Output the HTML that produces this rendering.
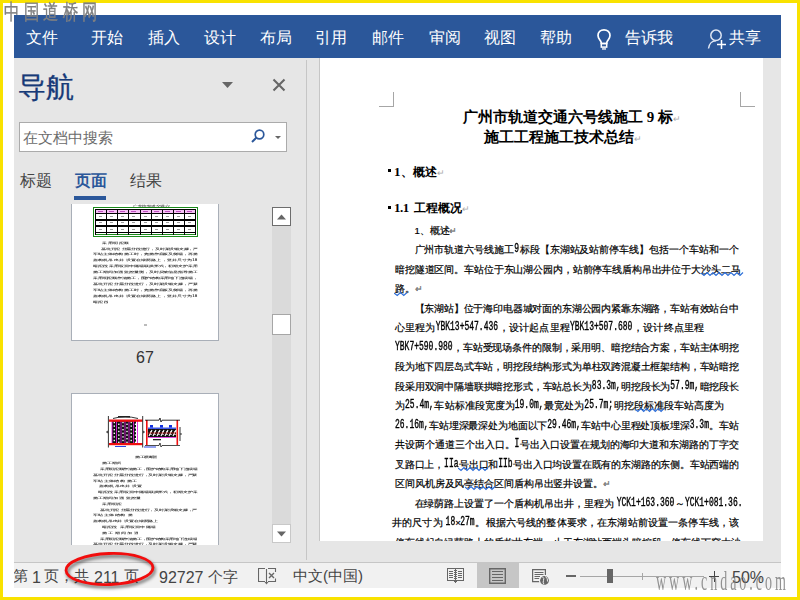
<!DOCTYPE html>
<html><head><meta charset="utf-8">
<style>
*{margin:0;padding:0;box-sizing:border-box}
html,body{width:800px;height:600px;overflow:hidden;background:#fff;font-family:"Liberation Sans",sans-serif}
.abs{position:absolute}
#ybT{left:0;top:0;width:800px;height:3px;background:#f9e200}
#ybB{left:0;top:597px;width:800px;height:3px;background:#f9e200}
#ybL{left:0;top:0;width:3px;height:600px;background:#f9e200}
#ybR{left:797px;top:0;width:3px;height:600px;background:#f9e200}
#ribbon{left:14px;top:15px;width:767px;height:43px;background:#2b579a}
.tab{position:absolute;top:14px;color:#fff;font-size:15.5px;line-height:17px;white-space:nowrap}
#nav{left:14px;top:58px;width:292px;height:504px;background:#e6e6e6}
#sep1{left:306px;top:60px;width:1px;height:500px;background:#c6c6c6}
#gap{left:307px;top:58px;width:12px;height:504px;background:#e6e6e6}
#docbg{left:306px;top:58px;width:475px;height:504px;background:#e6e6e6}
#page{left:320px;top:58px;width:443px;height:483px;background:#fff;overflow:hidden}
#pageline{left:319px;top:58px;width:1px;height:483px;background:#c6c6c6}
#status{left:14px;top:562px;width:767px;height:26px;background:#f1f1f1;border-top:1px solid #c6c6c6}
.tl{position:absolute;height:12px;font-size:9.2px;line-height:12px;font-weight:bold;color:#3a3a3a;white-space:nowrap;overflow:hidden;text-align:justify;text-align-last:justify;transform:scale(.5,.3);transform-origin:0 50%}
.ttl{font-size:15px;line-height:20px;font-weight:bold;color:#000;white-space:nowrap;font-family:"Liberation Serif",serif}
.hd{font-size:12px;line-height:17px;font-weight:bold;color:#000;white-space:nowrap;font-family:"Liberation Serif",serif}
.sf{font-family:"Liberation Serif",serif}
.pm{font-size:9px;color:#aaa;font-weight:normal;font-family:"Liberation Sans",sans-serif}
.bl{font-size:9.6px;line-height:14px;color:#000;white-space:nowrap;letter-spacing:-0.6px;-webkit-text-stroke:.2px #000}
.j{text-align:justify;text-align-last:justify}
.nj{letter-spacing:-0.1px}
.m{display:inline-block;font-family:"Liberation Mono",monospace;font-size:8px;letter-spacing:0;-webkit-text-stroke:.25px #000;transform:scaleY(1.5);transform-origin:50% 72%}
.st{position:absolute;top:4px;font-size:15px;line-height:17px;color:#444;white-space:nowrap}
</style></head><body>
<div class="abs" id="ribbon">
  <div class="tab" style="left:12px">文件</div>
  <div class="tab" style="left:77px">开始</div>
  <div class="tab" style="left:134px">插入</div>
  <div class="tab" style="left:190px">设计</div>
  <div class="tab" style="left:246px">布局</div>
  <div class="tab" style="left:301px">引用</div>
  <div class="tab" style="left:358px">邮件</div>
  <div class="tab" style="left:415px">审阅</div>
  <div class="tab" style="left:470px">视图</div>
  <div class="tab" style="left:526px">帮助</div>
  <div class="tab" style="left:611px">告诉我</div>
  <svg class="abs" style="left:580px;top:13px" width="20" height="24"><path d="M8.5 27.5" /><path d="M10 1.8C6.5 1.8 4 4.3 4 7.5C4 10 5.5 11.5 6.7 13.3C7.3 14.2 7.3 15 7.3 15.5H12.7C12.7 15 12.7 14.2 13.3 13.3C14.5 11.5 16 10 16 7.5C16 4.3 13.5 1.8 10 1.8Z" fill="none" stroke="#fff" stroke-width="1.7"/><rect x="7.3" y="15.5" width="5.4" height="3.6" fill="none" stroke="#fff" stroke-width="1.5"/><rect x="8" y="20.3" width="4" height="1.3" fill="#fff"/></svg>
  <svg class="abs" style="left:692px;top:12px" width="22" height="24"><circle cx="10" cy="8.3" r="5.2" fill="none" stroke="#dfe6f3" stroke-width="1.5"/><path d="M2.5 21.5C3 17 6 13.8 10 13.8" fill="none" stroke="#dfe6f3" stroke-width="1.5"/><path d="M11 17.5H20M15.5 13V22" stroke="#fff" stroke-width="1.5"/></svg>

  <div class="tab" style="left:715px">共享</div>
</div>
<div class="abs" id="nav">
  <div class="abs" style="left:4px;top:14px;font-size:28px;line-height:32px;color:#173a78;white-space:nowrap;-webkit-text-stroke:.3px #173a78">导航</div>
  <svg class="abs" style="left:208px;top:24px" width="12" height="7"><path d="M0 0H11L5.5 6Z" fill="#666"/></svg>
  <svg class="abs" style="left:258px;top:20px" width="14" height="14"><path d="M1.5 1.5L12.5 12.5M12.5 1.5L1.5 12.5" stroke="#666" stroke-width="2.1"/></svg>
  <div class="abs" style="left:5px;top:64px;width:268px;height:30px;background:#fff;border:1px solid #ababab"></div>
  <div class="abs" style="left:9px;top:71px;font-size:15px;line-height:17px;color:#6b6b6b;white-space:nowrap">在文档中搜索</div>
  <svg class="abs" style="left:236px;top:70px" width="16" height="16"><circle cx="9.5" cy="6.5" r="4.3" fill="none" stroke="#2b579a" stroke-width="1.7"/><path d="M6.5 9.5L2 14" stroke="#2b579a" stroke-width="2"/></svg>
  <svg class="abs" style="left:261px;top:78px" width="7" height="4"><path d="M0 0H6L3 3Z" fill="#666"/></svg>
  <div class="abs" style="left:6px;top:114px;font-size:15.5px;line-height:17px;color:#444;white-space:nowrap">标题</div>
  <div class="abs" style="left:61px;top:114px;font-size:15.5px;line-height:17px;color:#2b579a;font-weight:bold;white-space:nowrap">页面</div>
  <div class="abs" style="left:116px;top:114px;font-size:15.5px;line-height:17px;color:#444;white-space:nowrap">结果</div>
  <div class="abs" style="left:60px;top:138px;width:32px;height:4px;background:#2b579a"></div>
</div>
<div class="abs" id="docbg"></div>
<div class="abs" id="thumbs" style="left:14px;top:204px;width:292px;height:341px;overflow:hidden">
<div style="position:absolute;left:-14px;top:-204px;width:320px;height:560px">
<div class="abs" style="left:71px;top:150px;width:148px;height:191px;background:#fff;border:1px solid #a9afb8"></div>
<div class="tl" style="left:133px;top:200.0px;width:74.0px;opacity:.8">广州市轨道交通六号线施工</div>
<div class="abs" style="left:93px;top:207px;width:105px;height:30px;border:1px solid #1a8a1a;"></div>
<div class="abs" style="left:94px;top:208px;width:103px;height:28px;border:1px solid #fff;"></div><div class="abs" style="left:95px;top:209px;width:101px;height:26px;border:1px solid #1a8a1a;"></div>
<svg class="abs" style="left:95px;top:209px" width="101" height="26" shape-rendering="crispEdges">
<rect x="0" y="1" width="101" height="3" fill="#f6c0f6"/>
<rect x="0" y="0" width="1" height="26" fill="#000"/>
<rect x="11" y="0" width="1" height="26" fill="#000"/>
<rect x="22" y="0" width="1" height="26" fill="#000"/>
<rect x="33" y="0" width="1" height="26" fill="#000"/>
<rect x="45" y="0" width="1" height="26" fill="#000"/>
<rect x="56" y="0" width="1" height="26" fill="#000"/>
<rect x="67" y="0" width="1" height="26" fill="#000"/>
<rect x="78" y="0" width="1" height="26" fill="#000"/>
<rect x="89" y="0" width="1" height="26" fill="#000"/>
<rect x="100" y="0" width="1" height="26" fill="#000"/>
<rect x="3" y="2" width="5" height="1" fill="#c050c0"/>
<rect x="14" y="2" width="5" height="1" fill="#c050c0"/>
<rect x="25" y="2" width="5" height="1" fill="#c050c0"/>
<rect x="36" y="2" width="5" height="1" fill="#c050c0"/>
<rect x="48" y="2" width="5" height="1" fill="#c050c0"/>
<rect x="59" y="2" width="5" height="1" fill="#c050c0"/>
<rect x="70" y="2" width="5" height="1" fill="#c050c0"/>
<rect x="81" y="2" width="5" height="1" fill="#c050c0"/>
<rect x="92" y="2" width="5" height="1" fill="#c050c0"/>
<rect x="0" y="0" width="101" height="1" fill="#000"/>
<rect x="0" y="4" width="101" height="1" fill="#000"/>
<rect x="0" y="10" width="101" height="1.5" fill="#000"/>
<rect x="0" y="16" width="101" height="1.5" fill="#000"/>
<rect x="0" y="23" width="101" height="1" fill="#000"/>
<rect x="4" y="7" width="3" height="1" fill="#999"/>
<rect x="15" y="7" width="3" height="1" fill="#999"/>
<rect x="26" y="7" width="3" height="1" fill="#999"/>
<rect x="37" y="7" width="3" height="1" fill="#999"/>
<rect x="49" y="7" width="3" height="1" fill="#999"/>
<rect x="60" y="7" width="3" height="1" fill="#999"/>
<rect x="71" y="7" width="3" height="1" fill="#999"/>
<rect x="82" y="7" width="3" height="1" fill="#999"/>
<rect x="93" y="7" width="3" height="1" fill="#999"/>
<rect x="4" y="13" width="3" height="1" fill="#999"/>
<rect x="15" y="13" width="3" height="1" fill="#999"/>
<rect x="26" y="13" width="3" height="1" fill="#999"/>
<rect x="37" y="13" width="3" height="1" fill="#999"/>
<rect x="49" y="13" width="3" height="1" fill="#999"/>
<rect x="60" y="13" width="3" height="1" fill="#999"/>
<rect x="71" y="13" width="3" height="1" fill="#999"/>
<rect x="82" y="13" width="3" height="1" fill="#999"/>
<rect x="93" y="13" width="3" height="1" fill="#999"/>
<rect x="4" y="20" width="3" height="1" fill="#999"/>
<rect x="15" y="20" width="3" height="1" fill="#999"/>
<rect x="26" y="20" width="3" height="1" fill="#999"/>
<rect x="37" y="20" width="3" height="1" fill="#999"/>
<rect x="49" y="20" width="3" height="1" fill="#999"/>
<rect x="60" y="20" width="3" height="1" fill="#999"/>
<rect x="71" y="20" width="3" height="1" fill="#999"/>
<rect x="82" y="20" width="3" height="1" fill="#999"/>
<rect x="93" y="20" width="3" height="1" fill="#999"/>
</svg>
<div class="tl" style="left:102px;top:237.2px;width:53.0px">采用明挖顺</div>
<div class="tl" style="left:100.7px;top:242.8px;width:193.4px">基坑开挖 分层分段进行，及时架设钢支撑，严</div>
<div class="tl" style="left:93px;top:248.4px;width:208.8px">车站主体结构 施工时，先施作底板及侧墙，再施</div>
<div class="tl" style="left:93px;top:254.2px;width:208.8px">盾构机吊出井 设置在绿荫路上，竖井尺寸为18</div>
<div class="tl" style="left:93px;top:260.0px;width:208.8px">暗挖段 采用双洞中隔墙联拱形式，初期支护采用</div>
<div class="tl" style="left:93px;top:265.8px;width:208.8px">施工期间加强 监控量测，及时反馈信息指导施工</div>
<div class="tl" style="left:93px;top:271.7px;width:208.8px">采用明挖顺作法施工，围护结构采用地下连续墙，</div>
<div class="tl" style="left:93px;top:277.6px;width:208.8px">基坑开挖 分层分段进行，及时架设钢支撑，严禁</div>
<div class="tl" style="left:93px;top:283.6px;width:208.8px">车站主体结构 施工时，先施作底板及侧墙，再施</div>
<div class="tl" style="left:93px;top:289.5px;width:208.8px">盾构机吊出井 设置在绿荫路上，竖井尺寸为18</div>
<div class="tl" style="left:93px;top:295.5px;width:30.0px">暗挖段</div>
<div class="abs" style="left:144px;top:324px;width:3px;height:2px;background:#bbb"></div>
<div class="abs" style="left:71px;top:393px;width:148px;height:200px;background:#fff;border:1px solid #a9afb8"></div>
<svg class="abs" style="left:100px;top:410px" width="90" height="42">
<rect x="12" y="10" width="24" height="24" fill="#111"/>
<g fill="#fff"><rect x="13.6" y="11.8" width="1.4" height="1.4"/><rect x="13.6" y="15.4" width="1.4" height="1.4"/><rect x="13.6" y="19.0" width="1.4" height="1.4"/><rect x="13.6" y="22.6" width="1.4" height="1.4"/><rect x="13.6" y="26.2" width="1.4" height="1.4"/><rect x="13.6" y="29.8" width="1.4" height="1.4"/><rect x="18.1" y="13.6" width="1.4" height="1.4"/><rect x="18.1" y="17.2" width="1.4" height="1.4"/><rect x="18.1" y="20.8" width="1.4" height="1.4"/><rect x="18.1" y="24.4" width="1.4" height="1.4"/><rect x="18.1" y="28.0" width="1.4" height="1.4"/><rect x="18.1" y="31.6" width="1.4" height="1.4"/><rect x="22.3" y="11.8" width="1.4" height="1.4"/><rect x="22.3" y="15.4" width="1.4" height="1.4"/><rect x="22.3" y="19.0" width="1.4" height="1.4"/><rect x="22.3" y="22.6" width="1.4" height="1.4"/><rect x="22.3" y="26.2" width="1.4" height="1.4"/><rect x="22.3" y="29.8" width="1.4" height="1.4"/><rect x="26.3" y="13.6" width="1.4" height="1.4"/><rect x="26.3" y="17.2" width="1.4" height="1.4"/><rect x="26.3" y="20.8" width="1.4" height="1.4"/><rect x="26.3" y="24.4" width="1.4" height="1.4"/><rect x="26.3" y="28.0" width="1.4" height="1.4"/><rect x="26.3" y="31.6" width="1.4" height="1.4"/><rect x="30.5" y="11.8" width="1.4" height="1.4"/><rect x="30.5" y="15.4" width="1.4" height="1.4"/><rect x="30.5" y="19.0" width="1.4" height="1.4"/><rect x="30.5" y="22.6" width="1.4" height="1.4"/><rect x="30.5" y="26.2" width="1.4" height="1.4"/><rect x="30.5" y="29.8" width="1.4" height="1.4"/><rect x="34.8" y="13.6" width="1.4" height="1.4"/><rect x="34.8" y="17.2" width="1.4" height="1.4"/><rect x="34.8" y="20.8" width="1.4" height="1.4"/><rect x="34.8" y="24.4" width="1.4" height="1.4"/><rect x="34.8" y="28.0" width="1.4" height="1.4"/><rect x="34.8" y="31.6" width="1.4" height="1.4"/></g>
<g stroke="#e020e0" stroke-width="0.9"><line x1="12" y1="11" x2="12" y2="34"/><line x1="16.5" y1="11" x2="16.5" y2="34"/><line x1="21" y1="11" x2="21" y2="34"/><line x1="25" y1="11" x2="25" y2="34"/><line x1="29" y1="11" x2="29" y2="34"/><line x1="33.5" y1="11" x2="33.5" y2="34"/><line x1="37.5" y1="11" x2="37.5" y2="34"/></g>
<rect x="9" y="9.5" width="33.5" height="2.3" fill="#f01010"/>
<rect x="9" y="33" width="33.5" height="2.2" fill="#f01010"/>
<g stroke="#000" stroke-width="0.8" fill="none"><path d="M8.4 6V37.5M42.7 6V37.5M8 21L6.5 22L8 23M43 21L44.5 22L43 23M13 8.5Q25 5 38 8.5"/></g>
<rect x="18" y="6" width="12" height="1.5" fill="#222"/>
<line x1="15" y1="36.5" x2="26" y2="36.5" stroke="#1030e0" stroke-width="0.9"/>
<rect x="46" y="10" width="1.6" height="25" fill="#f01010"/>
<rect x="76.5" y="10" width="1.6" height="25" fill="#f01010"/>
<path d="M45 10.2H59L60 8L61 12L62 10.2H80" stroke="#000" stroke-width="0.8" fill="none"/>
<rect x="48" y="17.6" width="28" height="1.2" fill="#1030e0"/>
<rect x="50" y="15" width="3" height="2.6" fill="#1030e0"/><rect x="60" y="15" width="3" height="2.6" fill="#1030e0"/><rect x="69" y="15" width="3" height="2.6" fill="#1030e0"/>
<rect x="48" y="19" width="28" height="8" fill="#111"/>
<path d="M49 26L52 20M53 26L56 20M57 26L60 20M61 26L64 20M65 26L68 20M69 26L72 20M73 26L76 20" stroke="#fff" stroke-width="1.1"/><path d="M50 21.5H76M50 24.5H76" stroke="#fff" stroke-width="0.6" stroke-dasharray="2 2"/>
<line x1="48" y1="23" x2="76" y2="23" stroke="#f02020" stroke-width="0.6"/>
<line x1="48" y1="27.5" x2="76" y2="27.5" stroke="#e020e0" stroke-width="0.8"/>
<path d="M80 17V31M80 24L82 24" stroke="#000" stroke-width="0.8" fill="none"/>
<path d="M45 35.5H59L60 33L61 37L62 35.5H80" stroke="#000" stroke-width="0.7" fill="none"/>
<rect x="53" y="29" width="8" height="1.3" fill="#222"/>
<line x1="44" y1="37" x2="56" y2="37" stroke="#1030e0" stroke-width="0.9"/>
</svg>
<div class="tl" style="left:135px;top:451.0px;width:44.0px">施工横断面布置图</div>
<div class="tl" style="left:102px;top:456.6px;width:38.0px">施工期间</div>
<div class="tl" style="left:100px;top:463.0px;width:194.6px">采用明挖顺作法施工，围护结构采用地下连续墙</div>
<div class="tl" style="left:93px;top:469.3px;width:208.0px">基坑开挖 分层分段进行，及时架设钢支撑，严禁</div>
<div class="tl" style="left:93px;top:474.6px;width:88.0px">车站主体结构 施工</div>
<div class="tl" style="left:99px;top:480.0px;width:86.0px">盾构机吊出井 设置</div>
<div class="tl" style="left:97.7px;top:486.0px;width:198.6px">暗挖段 采用双洞中隔墙联拱形式，初期支护采</div>
<div class="tl" style="left:93px;top:491.8px;width:94.8px">施工期间加强 监控量</div>
<div class="tl" style="left:101.6px;top:497.6px;width:38.8px">采用明挖</div>
<div class="tl" style="left:100px;top:503.6px;width:194.0px">基坑开挖 分层分段进行，及时架设钢支撑，严</div>
<div class="tl" style="left:93px;top:509.4px;width:79.0px">车站主体结构 施</div>
<div class="tl" style="left:93px;top:515.0px;width:129.6px">盾构机吊出井 设置在绿荫路上</div>
<div class="tl" style="left:102px;top:521.0px;width:106.8px">暗挖段 采用双洞中隔墙</div>
<div class="tl" style="left:102px;top:526.8px;width:72.0px">施工期间加强 </div>
<div class="tl" style="left:100px;top:532.5px;width:194.0px">采用明挖顺作法施工，围护结构采用地下连续墙</div>
<div class="tl" style="left:93px;top:538.4px;width:208.0px">基坑开挖 分层分段进行，及时架设钢支撑，严禁</div>
</div></div>
<div class="abs" style="left:136px;top:349px;font-size:16px;line-height:18px;color:#333">67</div>
<div class="abs" style="left:272px;top:226px;width:19px;height:298px;background:#dadada"></div>
<div class="abs" style="left:272px;top:207px;width:19px;height:19px;background:#fff;border:1px solid #6d6d6d"></div>
<svg class="abs" style="left:277px;top:214px" width="10" height="6"><path d="M0 5.5H9L4.5 0.5Z" fill="#666"/></svg>
<div class="abs" style="left:272px;top:314px;width:19px;height:21px;background:#fff;border:1px solid #a6a6a6"></div>
<div class="abs" style="left:272px;top:524px;width:19px;height:19px;background:#fff;border:1px solid #c8c8c8"></div>
<svg class="abs" style="left:277px;top:531px" width="10" height="6"><path d="M0 0.5H9L4.5 5.5Z" fill="#666"/></svg>
<div class="abs" id="sep1"></div>
<div class="abs" id="page"></div>
<div class="abs" id="pageline"></div>
<div class="abs" id="doc" style="left:0;top:0;width:763px;height:541px;overflow:hidden"><div class="abs" style="left:379px;top:92px;width:15px;height:15px;border-right:1px solid #a6a6a6;border-bottom:1px solid #a6a6a6"></div>
<div class="abs" style="left:740px;top:92px;width:15px;height:15px;border-left:1px solid #a6a6a6;border-bottom:1px solid #a6a6a6"></div>
<div class="abs ttl" style="left:463px;top:107px">广州市轨道交通六号线施工 <span class="sf">9</span> 标<span class="pm">↵</span></div>
<div class="abs ttl" style="left:484px;top:127px">施工工程施工技术总结<span class="pm">↵</span></div>
<div class="abs" style="left:388px;top:169px;width:3px;height:3px;background:#000"></div>
<div class="abs hd" style="left:394px;top:163px"><span class="sf" style="font-size:13px">1</span>、概述<span class="pm">↵</span></div>
<div class="abs" style="left:388px;top:206px;width:3px;height:3px;background:#000"></div>
<div class="abs hd" style="left:394px;top:199px"><span class="sf" style="font-size:13px;letter-spacing:-.5px">1.1</span><span style="margin-left:5px">工程概况</span><span class="pm">↵</span></div>
<div class="abs bl nj" style="left:414.5px;top:223.5px">1、概述<span class="pm">↵</span></div>
<div class="abs bl j" style="left:414.5px;top:243.0px;width:324.0px">广州市轨道六号线施工<span class="m">9</span>标段【东湖站及站前停车线】包括一个车站和一个</div>
<div class="abs bl j" style="left:395px;top:262.5px;width:345px">暗挖隧道区间。车站位于东山湖公园内，站前停车线盾构吊出井位于大沙头二马</div>
<div class="abs bl nj" style="left:395px;top:282.0px">路。<span class="pm">↵</span></div>
<div class="abs bl j" style="left:414.5px;top:301.5px;width:324.0px">【东湖站】位于海印电器城对面的东湖公园内紧靠东湖路，车站有效站台中</div>
<div class="abs bl j" style="left:395px;top:321.0px;width:308.5px">心里程为<span class="m">YBK13+547.436</span>，设计起点里程<span class="m">YBK13+507.680</span>，设计终点里程</div>
<div class="abs bl j" style="left:395px;top:340.5px;width:343.5px"><span class="m">YBK7+590.980</span>，车站受现场条件的限制，采用明、暗挖结合方案，车站主体明挖</div>
<div class="abs bl j" style="left:395px;top:360.0px;width:343.5px">段为地下四层岛式车站，明挖段结构形式为单柱双跨混凝土框架结构，车站暗挖</div>
<div class="abs bl j" style="left:395px;top:379.5px;width:343.5px">段采用双洞中隔墙联拱暗挖形式，车站总长为<span class="m">83.3m,</span>明挖段长为<span class="m">57.9m,</span>暗挖段长</div>
<div class="abs bl j" style="left:395px;top:399.0px;width:328.5px">为<span class="m">25.4m,</span>车站标准段宽度为<span class="m">19.0m,</span>最宽处为<span class="m">25.7m;</span>明挖段标准段车站高度为</div>
<div class="abs bl j" style="left:395px;top:418.5px;width:343.5px"><span class="m">26.16m,</span>车站埋深最深处为地面以下<span class="m">29.46m,</span>车站中心里程处顶板埋深<span class="m">3.3m</span>。车站</div>
<div class="abs bl j" style="left:395px;top:438.0px;width:343.5px">共设两个通道三个出入口。<span class="m">I</span>号出入口设置在规划的海印大道和东湖路的丁字交</div>
<div class="abs bl j" style="left:395px;top:457.5px;width:343.5px">叉路口上，<span class="m">IIa</span>号出口和<span class="m">IIb</span>号出入口均设置在既有的东湖路的东侧。车站西端的</div>
<div class="abs bl nj" style="left:395px;top:477.0px">区间风机房及风亭结合区间盾构吊出竖井设置。<span class="pm">↵</span></div>
<div class="abs bl j" style="left:414.5px;top:496.5px;width:328.0px">在绿荫路上设置了一个盾构机吊出井，里程为 <span class="m">YCK1+163.360</span>～<span class="m">YCK1+081.36.</span></div>
<div class="abs bl j" style="left:392px;top:516.0px;width:346.5px">井的尺寸为 <span class="m">18</span>×<span class="m">27m</span>。根据六号线的整体要求，在东湖站前设置一条停车线，该</div>
<div class="abs bl j" style="left:395px;top:535.5px;width:345px">停车线起自绿荫路上的盾构井东端，止于东湖站西端头暗挖段，停车线下穿大沙</div>
<svg class="abs" style="left:700.5px;top:272px" width="43" height="5"><path d="M0 1 L3.00 3.5 L6.00 0.5 L9.00 3.5 L12.00 0.5 L15.00 3.5 L18.00 0.5 L21.00 3.5 L24.00 0.5 L27.00 3.5 L30.00 0.5 L33.00 3.5 L36.00 0.5 L39.00 3.5 L42.00 0.5" fill="none" stroke="#2f6fd8" stroke-width="1.1"/></svg>
<svg class="abs" style="left:394px;top:292px" width="14" height="5"><path d="M0 1 L3.25 3.5 L6.50 0.5 L9.75 3.5 L13.00 0.5" fill="none" stroke="#2f6fd8" stroke-width="1.1"/></svg>
<svg class="abs" style="left:635px;top:408px" width="30" height="5"><path d="M0 1 L2.90 3.5 L5.80 0.5 L8.70 3.5 L11.60 0.5 L14.50 3.5 L17.40 0.5 L20.30 3.5 L23.20 0.5 L26.10 3.5 L29.00 0.5" fill="none" stroke="#2f6fd8" stroke-width="1.1"/></svg>
<svg class="abs" style="left:457.5px;top:467px" width="31" height="5"><path d="M0 1 L3.00 3.5 L6.00 0.5 L9.00 3.5 L12.00 0.5 L15.00 3.5 L18.00 0.5 L21.00 3.5 L24.00 0.5 L27.00 3.5 L30.00 0.5" fill="none" stroke="#2f6fd8" stroke-width="1.1"/></svg>
<svg class="abs" style="left:464.5px;top:486px" width="31" height="5"><path d="M0 1 L3.00 3.5 L6.00 0.5 L9.00 3.5 L12.00 0.5 L15.00 3.5 L18.00 0.5 L21.00 3.5 L24.00 0.5 L27.00 3.5 L30.00 0.5" fill="none" stroke="#2f6fd8" stroke-width="1.1"/></svg></div>
<div class="abs" id="status">
  <div class="abs" style="left:0;top:0;width:767px;height:25px;overflow:hidden">
  <div class="st" style="left:-1px">第</div>
  <div class="st" style="left:18px;font-size:16px;top:6px">1</div>
  <div class="st" style="left:30px">页</div>
  <div class="st" style="left:45px">，</div>
  <div class="st" style="left:60px">共</div>
  <div class="st" style="left:80px;font-size:16px;top:6px">211</div>
  <div class="st" style="left:110px">页</div>
  <div class="st" style="left:145px;top:6px;font-size:16px">92727</div><div class="st" style="left:194px;top:5px">个字</div>
  <div class="st" style="left:279px">中文(中国)</div>
  <div class="st" style="left:718px;font-size:16px;top:6px">50%</div>
  </div>
  <svg class="abs" style="left:244px;top:5px" width="19" height="17"><g fill="none" stroke="#666" stroke-width="1.1"><path d="M7 0.5H0.5V13.5H7M10 0.5H17.5V4M17.5 10.5V13.5H10M8.5 1V15"/><path d="M11 5L16 10M16 5L11 10" stroke-width="1.4"/></g><path d="M6.5 14H10.5L8.5 16.5Z" fill="#666"/></svg>
  <svg class="abs" style="left:433px;top:5px" width="18" height="17" shape-rendering="crispEdges"><g fill="none" stroke="#666" stroke-width="1"><path d="M0.5 0.5H16.5V12.5H0.5Z"/><path d="M8.5 0V15"/><path d="M2 3.5H6M2 5.5H6M2 7.5H6M2 9.5H6M11 3.5H15M11 5.5H15M11 7.5H15M11 9.5H15"/><path d="M7 2.5H10M7 4.5H10M7 6.5H10M7 8.5H10M7 10.5H10"/></g><path d="M6.5 13H10.5L8.5 15.5Z" fill="#666"/></svg>
  <div class="abs" style="left:463px;top:0px;width:42px;height:25px;background:#c6c6c6"></div>
  <svg class="abs" style="left:475px;top:5px" width="18" height="17"><g fill="none" stroke="#666"><path d="M0.7 0.7H16.3V15.3H0.7Z" stroke-width="1.4"/><path d="M3 3.5H14M3 6.5H14M3 9.5H14M3 12.5H14" stroke-width="1.1"/></g></svg>
  <svg class="abs" style="left:518px;top:6px" width="20" height="18"><g fill="none" stroke="#666" stroke-width="1.2"><path d="M8 12.6H0.6V0.6H13.4V6"/><path d="M2.5 3.5H11.5M2.5 5.5H11.5M2.5 7.5H8M2.5 9.5H7.5" stroke-width="1"/></g><circle cx="12.5" cy="11.5" r="5.6" fill="#f1f1f1"/><circle cx="12.5" cy="11.5" r="4.4" fill="#666"/><path d="M10.5 8Q12.5 9 11.5 11.5Q10.5 13 12 15.5M13.5 7.5Q16 9.5 15.5 12.5" stroke="#f1f1f1" stroke-width="1" fill="none"/></svg>
  <div class="abs" style="left:552px;top:12px;width:10px;height:2px;background:#666"></div>
  <div class="abs" style="left:566px;top:13px;width:124px;height:1px;background:#a6a6a6"></div>
  <div class="abs" style="left:628px;top:10px;width:1px;height:7px;background:#a6a6a6"></div>
  <div class="abs" style="left:593px;top:6px;width:6px;height:14px;background:#666"></div>
  <div class="abs" style="left:695px;top:12.5px;width:10px;height:1.3px;background:#444"></div>
  <div class="abs" style="left:699.5px;top:8px;width:1.3px;height:11px;background:#444"></div>
</div>
<div class="abs" id="wm2" style="left:656px;top:565px;font-family:'Liberation Serif',serif;font-size:28px;line-height:32px;color:#7a7a7a;opacity:.8;white-space:nowrap;letter-spacing:6px;transform:scaleX(.5);transform-origin:0 0">www.cndao.com</div>

<svg class="abs" id="ell" style="left:55px;top:545px;overflow:visible" width="110" height="50">
<defs><filter id="sh" x="-20%" y="-40%" width="140%" height="180%"><feGaussianBlur stdDeviation="1.6"/></filter></defs>
<ellipse cx="56" cy="26.5" rx="43.5" ry="15.5" fill="none" stroke="#000" stroke-opacity=".45" stroke-width="3.5" transform="rotate(-2 56 26.5)" filter="url(#sh)"/>
<ellipse cx="54.5" cy="24" rx="43.5" ry="15.5" fill="none" stroke="#f20d0d" stroke-width="2.8" transform="rotate(-2 54.5 24)"/>
</svg>

</div>
<div class="abs" id="ybT"></div><div class="abs" id="ybB"></div><div class="abs" id="ybL"></div><div class="abs" id="ybR"></div>
<div class="abs" id="wm1" style="left:4px;top:1px;font-size:16px;line-height:18px;color:#808080;-webkit-text-stroke:.3px #808080;letter-spacing:4.6px;white-space:nowrap;transform:scale(.95,1.3);transform-origin:0 0;font-family:'Liberation Serif',serif">中国道桥网</div>
</body></html>
